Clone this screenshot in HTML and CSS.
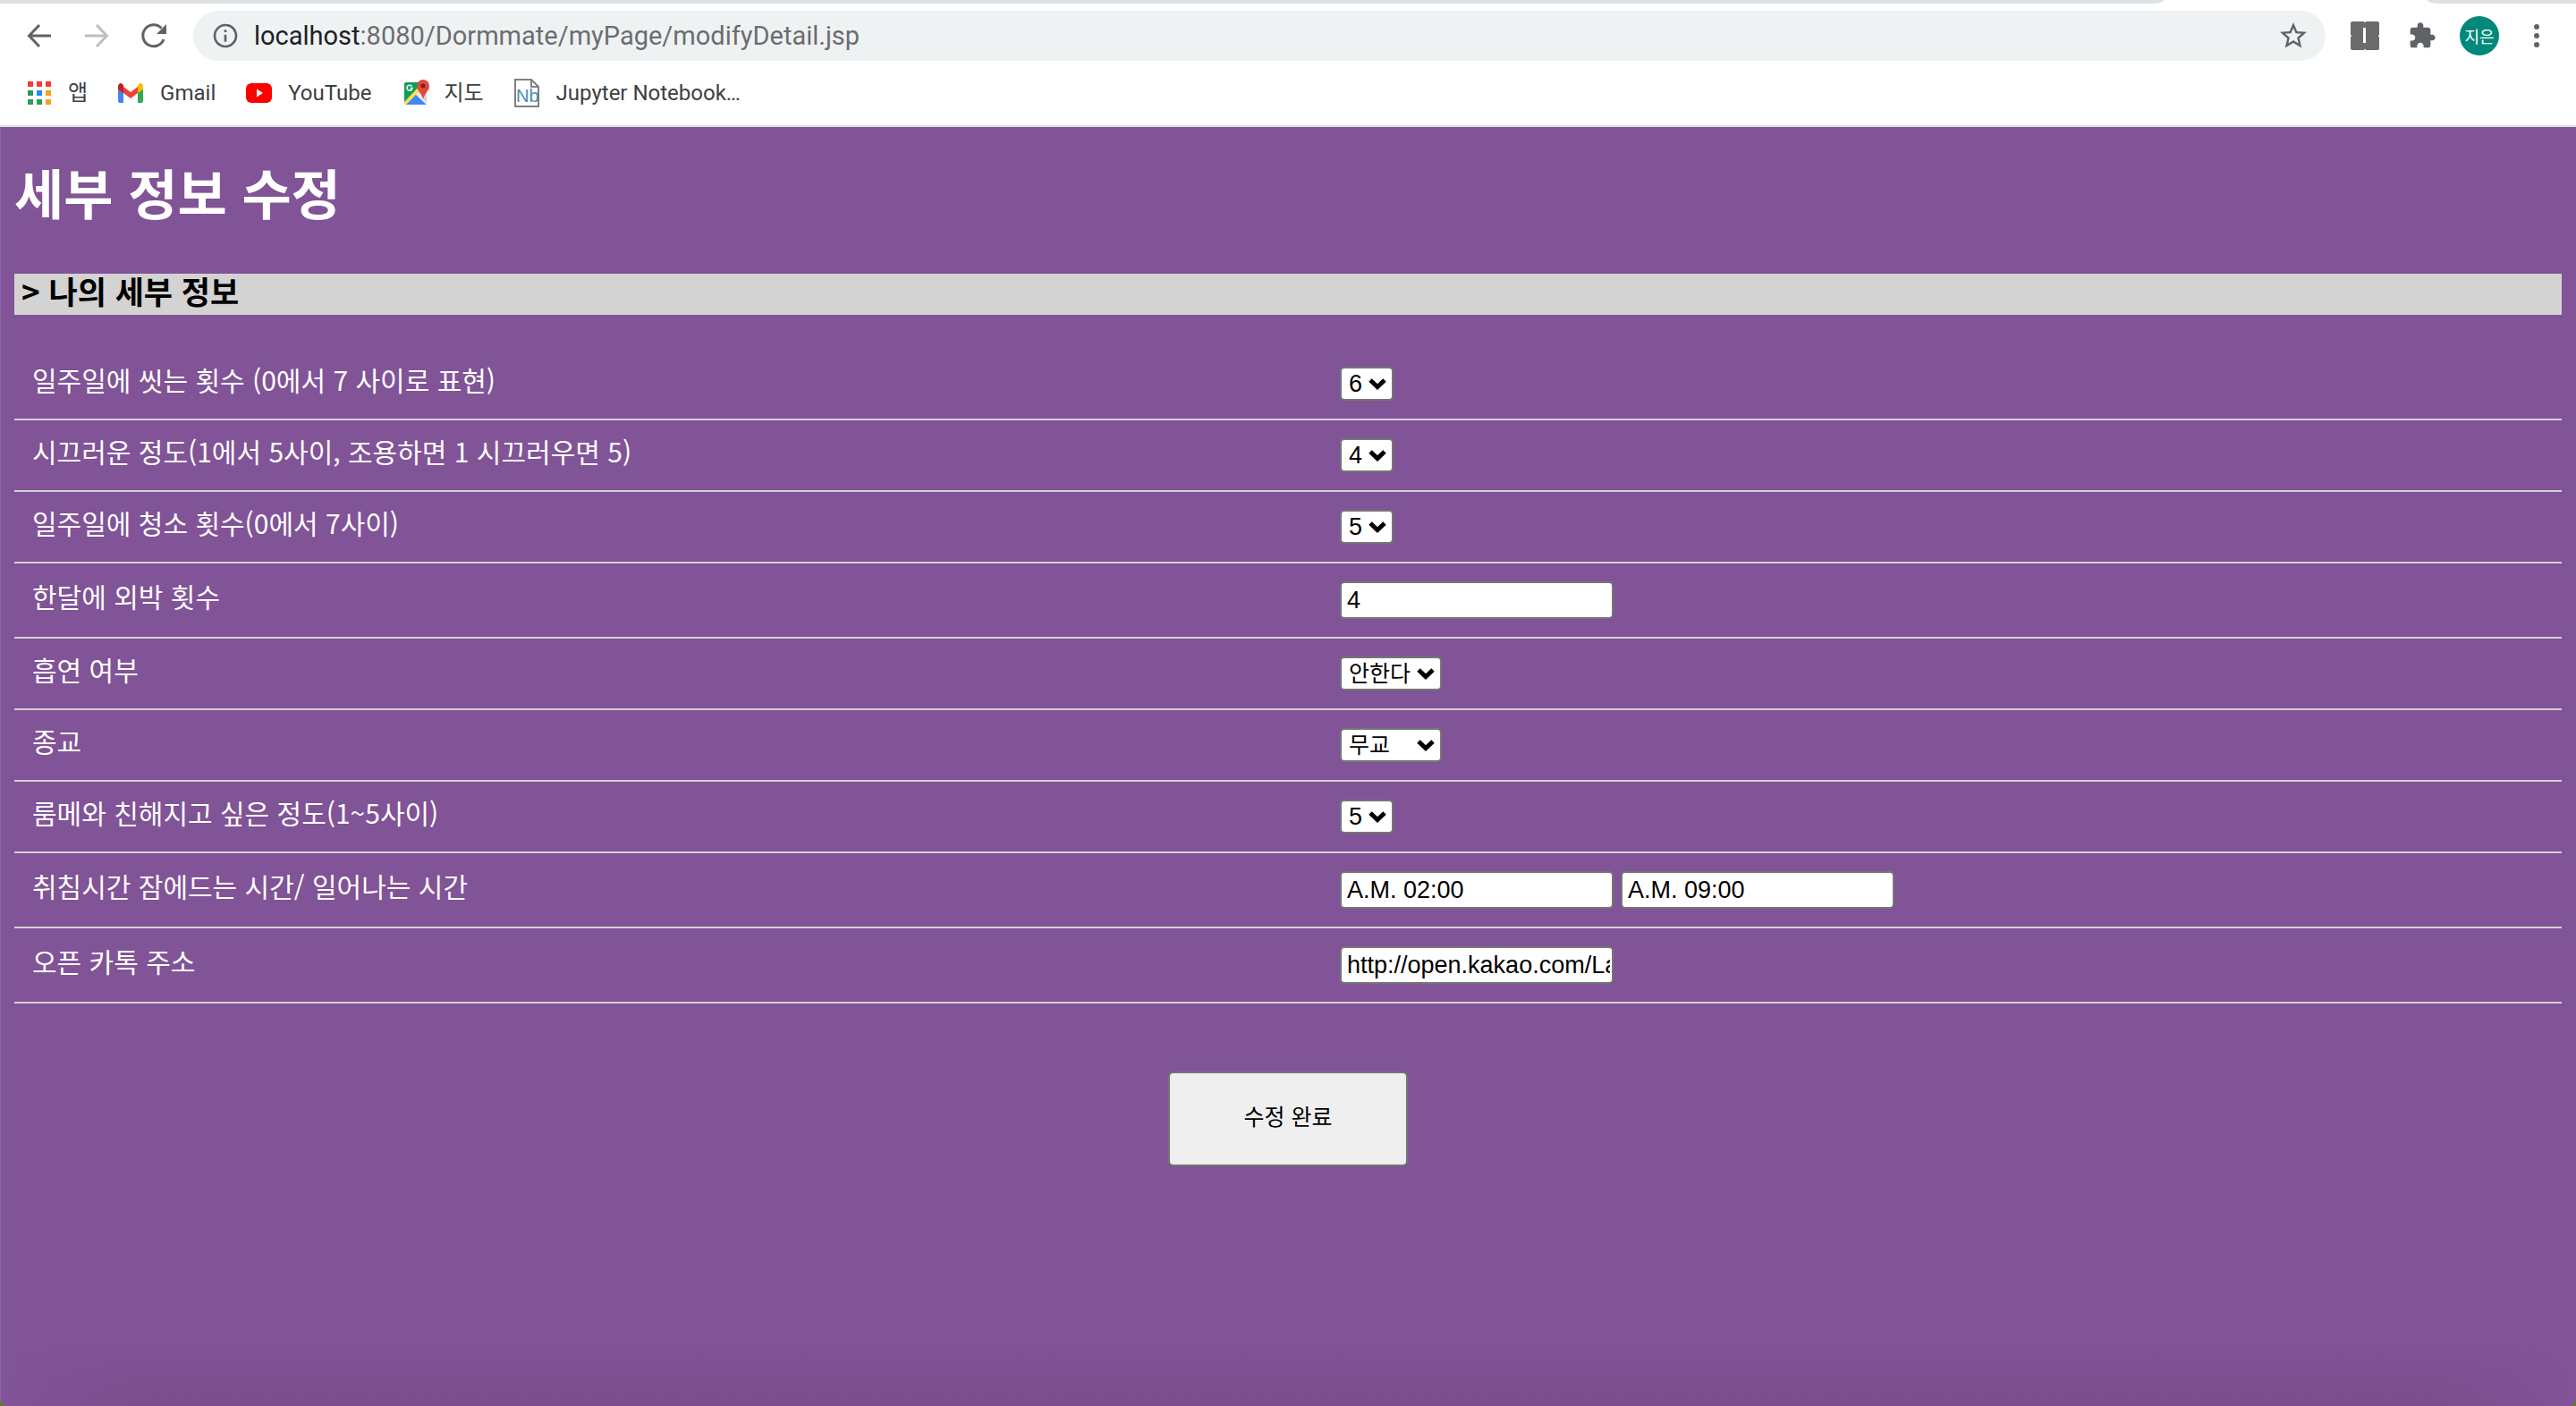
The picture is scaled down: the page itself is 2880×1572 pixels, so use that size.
FILE: index.html
```html
<!DOCTYPE html>
<html lang="ko">
<head>
<meta charset="utf-8">
<title>세부 정보 수정</title>
<link rel="stylesheet" href="styles.css">
</head>
<body>
<header class="browser">
  <div class="tabstrip"><span class="tabs-left"></span><span class="tabs-right"></span></div>
  <div class="toolbar">
    <nav class="nav-buttons">
      <button class="icon-button" type="button" aria-label="뒤로"><svg width="40" height="40" viewBox="0 0 40 40" fill="none" stroke="#5f6368" stroke-width="3"><path d="M33 20H9M20 8L8.500 20L20 32"/></svg></button>
      <button class="icon-button" type="button" aria-label="앞으로"><svg width="40" height="40" viewBox="0 0 40 40" fill="none" stroke="#bcbfc3" stroke-width="3"><path d="M7 20H31M20 8L31.500 20L20 32"/></svg></button>
      <button class="icon-button" type="button" aria-label="새로고침"><svg width="40" height="40" viewBox="0 0 40 40"><path d="M28.500 11.500A12 12 0 1 0 31 24" fill="none" stroke="#5f6368" stroke-width="3"/><path d="M34 7V18H23Z" fill="#5f6368"/></svg></button>
    </nav>
    <div class="address">
      <svg width="32" height="32" viewBox="0 0 24 24" fill="#5f6368"><path d="M11 7h2v2h-2zm0 4h2v6h-2zm1-9C6.480 2 2 6.480 2 12s4.480 10 10 10 10-4.480 10-10S17.520 2 12 2zm0 18c-4.410 0-8-3.590-8-8s3.590-8 8-8 8 3.590 8 8-3.590 8-8 8z"/></svg>
      <span class="url"><span class="host">localhost</span>:8080/Dormmate/myPage/modifyDetail.jsp</span>
      <button class="icon-button" type="button" aria-label="북마크"><svg width="36" height="36" viewBox="0 0 24 24" fill="#5f6368"><path d="M22 9.240l-7.190-.620L12 2 9.190 8.630 2 9.240l5.460 4.730L5.820 21 12 17.270 18.180 21l-1.630-7.030L22 9.240zM12 15.400l-3.760 2.270 1-4.280-3.320-2.880 4.380-.380L12 6.100l1.710 4.040 4.380.380-3.320 2.880 1 4.280L12 15.400z"/></svg></button>
    </div>
    <div class="extensions">
      <button class="icon-button" type="button" aria-label="확장 프로그램 I"><svg width="32" height="32" viewBox="0 0 32 32"><rect width="32" height="32" rx="2" fill="#6b6b6b"/><path d="M14 7h3v17h-3z" fill="#fff"/><path d="M15 0h2v1h-2zM15 31h2v1h-2zM0 15h1v2H0zM31 15h1v2h-1z" fill="#ddd"/></svg></button>
      <button class="icon-button" type="button" aria-label="확장 프로그램"><svg width="32" height="32" viewBox="0 0 24 24" fill="#5f6368"><path d="M20.500 11H19V7c0-1.100-.900-2-2-2h-4V3.500C13 2.120 11.880 1 10.500 1S8 2.120 8 3.500V5H4c-1.100 0-1.990.900-1.990 2v3.800H3.500c1.490 0 2.700 1.210 2.700 2.700s-1.210 2.700-2.700 2.700H2V20c0 1.100.900 2 2 2h3.800v-1.500c0-1.490 1.210-2.700 2.700-2.700 1.490 0 2.700 1.210 2.700 2.700V22H17c1.100 0 2-.900 2-2v-4h1.500c1.380 0 2.500-1.120 2.500-2.500S21.880 11 20.500 11z"/></svg></button>
      <button class="avatar" type="button">지은</button>
      <button class="icon-button menu" type="button" aria-label="메뉴"><svg width="8" height="32" viewBox="0 0 8 32" fill="#5f6368"><circle cx="4" cy="6" r="3"/><circle cx="4" cy="16" r="3"/><circle cx="4" cy="26" r="3"/></svg></button>
    </div>
  </div>
  <nav class="bookmarks">
    <a class="bookmark" href="#"><svg width="32" height="32" viewBox="0 0 32 32"><path d="M3 3h6v6H3zM13 3h6v6h-6zM23 3h6v6h-6z" fill="#f9392f"/><path d="M3 13h6v6H3zM3 23h6v6H3zM13 23h6v6h-6z" fill="#2a9d5c"/><path d="M13 13h6v6h-6z" fill="#1a8cff"/><path d="M23 13h6v6h-6zM23 23h6v6h-6z" fill="#f5a21b"/></svg>앱</a>
    <a class="bookmark" href="#"><svg width="32" height="32" viewBox="1 0 32 32"><path d="M2 9v16q0 2 2 2h4V14z" fill="#4285f4"/><path d="M30 9v16q0 2-2 2h-4V14z" fill="#34a853"/><path d="M8 9l8 6 8-6v7l-8 6-8-6z" fill="#ea4335"/><path d="M2 9q0-4 3.500-4L8 7v9l-6-4z" fill="#c5221f"/><path d="M30 9q0-4-3.500-4L24 7v9l6-4z" fill="#fbbc04"/></svg>Gmail</a>
    <a class="bookmark" href="#"><svg width="32" height="32" viewBox="0 0 32 32"><rect x="1" y="5" width="29" height="22" rx="6" fill="#f00"/><path d="M13 11.500v9l7-4.500z" fill="#fff"/></svg>YouTube</a>
    <a class="bookmark" href="#"><svg width="32" height="32" viewBox="-2 0 32 32"><path d="M4 4h18v12L2 26V6q0-2 2-2z" fill="#109d58"/><path d="M27 14l-8 5 8 10z" fill="#cfd2d6"/><path d="M3 25L19 8l4 7L6 29H4q-2 0-2-2z" fill="#ffdf4d"/><path d="M15 18l12 11H4z" fill="#4285f4"/><path d="M15 17l3-2 9 12v2z" fill="#e8eaed"/><path d="M10.500 8.500A3 3 0 1 0 11 10.500H8.500" fill="none" stroke="#fff" stroke-width="1.500"/><path d="M23 1a7 7 0 0 1 7 7c0 6-5 7-7 15-2-8-7-9-7-15a7 7 0 0 1 7-7z" fill="#dd4b3e"/><circle cx="23" cy="8" r="2.500" fill="#7c2018"/></svg>지도</a>
    <a class="bookmark" href="#"><svg width="32" height="32" viewBox="1 0 32 32"><path d="M3 1h18l8 8v22H3z" fill="#fff" stroke="#808080" stroke-width="2"/><path d="M21 1v8h8" fill="none" stroke="#808080" stroke-width="2"/><text x="4" y="26" class="nb">Nb</text></svg>Jupyter Notebook…</a>
  </nav>
</header>
<main class="page">
  <h1 class="title">세부 정보 수정</h1>
  <h2 class="section-title">&gt; 나의 세부 정보</h2>
  <form class="detail-form">
    <table class="details">
      <tr><th scope="row"><label for="wash">일주일에 씻는 횟수 (0에서 7 사이로 표현)</label></th><td><select id="wash" class="select"><option>6</option></select></td></tr>
      <tr><th scope="row"><label for="noise">시끄러운 정도(1에서 5사이, 조용하면 1 시끄러우면 5)</label></th><td><select id="noise" class="select"><option>4</option></select></td></tr>
      <tr><th scope="row"><label for="clean">일주일에 청소 횟수(0에서 7사이)</label></th><td><select id="clean" class="select"><option>5</option></select></td></tr>
      <tr><th scope="row"><label for="nights">한달에 외박 횟수</label></th><td><input id="nights" class="field" type="text" value="4"></td></tr>
      <tr><th scope="row"><label for="smoke">흡연 여부</label></th><td><select id="smoke" class="select wide"><option>안한다</option></select></td></tr>
      <tr><th scope="row"><label for="religion">종교</label></th><td><select id="religion" class="select wide"><option>무교</option></select></td></tr>
      <tr><th scope="row"><label for="friendly">룸메와 친해지고 싶은 정도(1~5사이)</label></th><td><select id="friendly" class="select"><option>5</option></select></td></tr>
      <tr><th scope="row"><label for="sleep">취침시간 잠에드는 시간/ 일어나는 시간</label></th><td><div class="pair"><input id="sleep" class="field" type="text" value="A.M. 02:00"><input class="field" type="text" aria-label="일어나는 시간" value="A.M. 09:00"></div></td></tr>
      <tr><th scope="row"><label for="kakao">오픈 카톡 주소</label></th><td><input id="kakao" class="field" type="text" value="http://open.kakao.com/Lab"></td></tr>
    </table>
    <button class="submit" type="submit">수정 완료</button>
  </form>
</main>
</body>
</html>
```
FILE: styles.css
```css
* { box-sizing: border-box; }

body {
  margin: 0;
  min-height: 100vh;
  display: flex;
  flex-direction: column;
  background: #5f7a1c;
  font-family: "Noto Sans CJK KR", sans-serif;
}

/* Browser chrome */
.browser {
  background: #fff;
  border-bottom: 2px solid #dee1e6;
  font-family: Roboto, "Noto Sans CJK KR", sans-serif;
}

.tabstrip {
  display: flex;
  justify-content: space-between;
  height: 4px;
}

.tabs-left {
  width: 84%;
  background: #dee1e6;
  border-bottom-right-radius: 12px 4px;
}

.tabs-right {
  width: 166px;
  background: #dee1e6;
  border-bottom-left-radius: 12px 4px;
}

.toolbar {
  display: flex;
  align-items: center;
  height: 72px;
  padding: 0 40px 0 24px;
}

.nav-buttons {
  display: flex;
  gap: 24px;
  margin-right: 24px;
}

.icon-button {
  display: flex;
  padding: 0;
  border: 0;
  background: none;
}

.address {
  flex: 1;
  display: flex;
  align-items: center;
  gap: 16px;
  height: 56px;
  padding: 0 18px 0 20px;
  border-radius: 28px;
  background: #eff2f3;
}

.url {
  flex: 1;
  font-size: 29px;
  line-height: 40px;
  color: #6b6d70;
}

.host { color: #202124; }

.extensions {
  display: flex;
  align-items: center;
  margin-left: 28px;
  gap: 32px;
}

.avatar {
  width: 44px;
  height: 44px;
  margin-left: -6px;
  padding: 0;
  border: 0;
  border-radius: 50%;
  background: #00897b;
  color: #fff;
  font: 18px/44px "Noto Sans CJK KR", sans-serif;
}

.menu { margin-left: 6px; }

.bookmarks {
  display: flex;
  align-items: center;
  gap: 33px;
  height: 64px;
  padding: 0 28px 8px;
}

.bookmark {
  display: flex;
  align-items: center;
  gap: 16px;
  color: #3c4043;
  font-size: 24px;
  line-height: 32px;
  text-decoration: none;
}

.nb {
  font: 20px "Liberation Sans Narrow", "Liberation Sans", sans-serif;
  fill: #4a8cb8;
}

/* Page */
.page {
  flex: 1;
  padding: 0 16px 40px 15px;
  border-left: 1px solid #8f66a5;
  border-radius: 0 0 8px 8px;
  background:
    linear-gradient(to right, #815397, transparent 160px, transparent calc(100% - 160px), #815397),
    linear-gradient(to top, #7a4d8c, #815397 72px);
  color: #fff;
}

.title {
  margin: 32px 0 52px;
  font-size: 60px;
  line-height: 80px;
}

.section-title {
  margin: 0 0 38px;
  padding: 0 8px 8px;
  background: #d3d3d3;
  color: #000;
  font-size: 35px;
  line-height: 38px;
}

.details {
  width: 100%;
  table-layout: fixed;
  border-collapse: separate;
  border-spacing: 0;
}

.details th,
.details td {
  padding: 20px;
  border-bottom: 2px solid #d3d3d3;
  text-align: left;
  vertical-align: middle;
}

.details th {
  padding-top: 10px;
  font-size: 30px;
  font-weight: 400;
  line-height: 40px;
}

.details td { padding-left: 58px; }

.select,
.field {
  display: block;
  margin: 0;
  border: 2px solid #767676;
  border-radius: 5px;
  background-color: #fff;
  color: #000;
}

.select {
  appearance: none;
  width: 60px;
  height: 38px;
  padding: 0 0 0 8px;
  background-image: url("data:image/svg+xml,%3Csvg xmlns='http://www.w3.org/2000/svg' width='20' height='14'%3E%3Cpath d='M2 3L10 10.500L18 3' fill='none' stroke='%23000' stroke-width='5'/%3E%3C/svg%3E");
  background-repeat: no-repeat;
  background-position: right 6px top 10px;
  font: 27px/32px "Liberation Sans", sans-serif;
}

.select.wide {
  width: 114px;
  padding-bottom: 4px;
  font: 25px/30px "Noto Sans CJK KR", sans-serif;
}

.field {
  width: 306px;
  height: 42px;
  padding: 0 2px 0 6px;
  font: 27px/36px "Liberation Sans", sans-serif;
}

.pair {
  display: flex;
  gap: 8px;
}

.submit {
  display: block;
  width: 268px;
  height: 106px;
  margin: 76px auto 0;
  padding: 0 0 8px;
  border: 2px solid #767676;
  border-radius: 6px;
  background: #efefef;
  color: #000;
  font: 25px/36px "Noto Sans CJK KR", sans-serif;
}
```
